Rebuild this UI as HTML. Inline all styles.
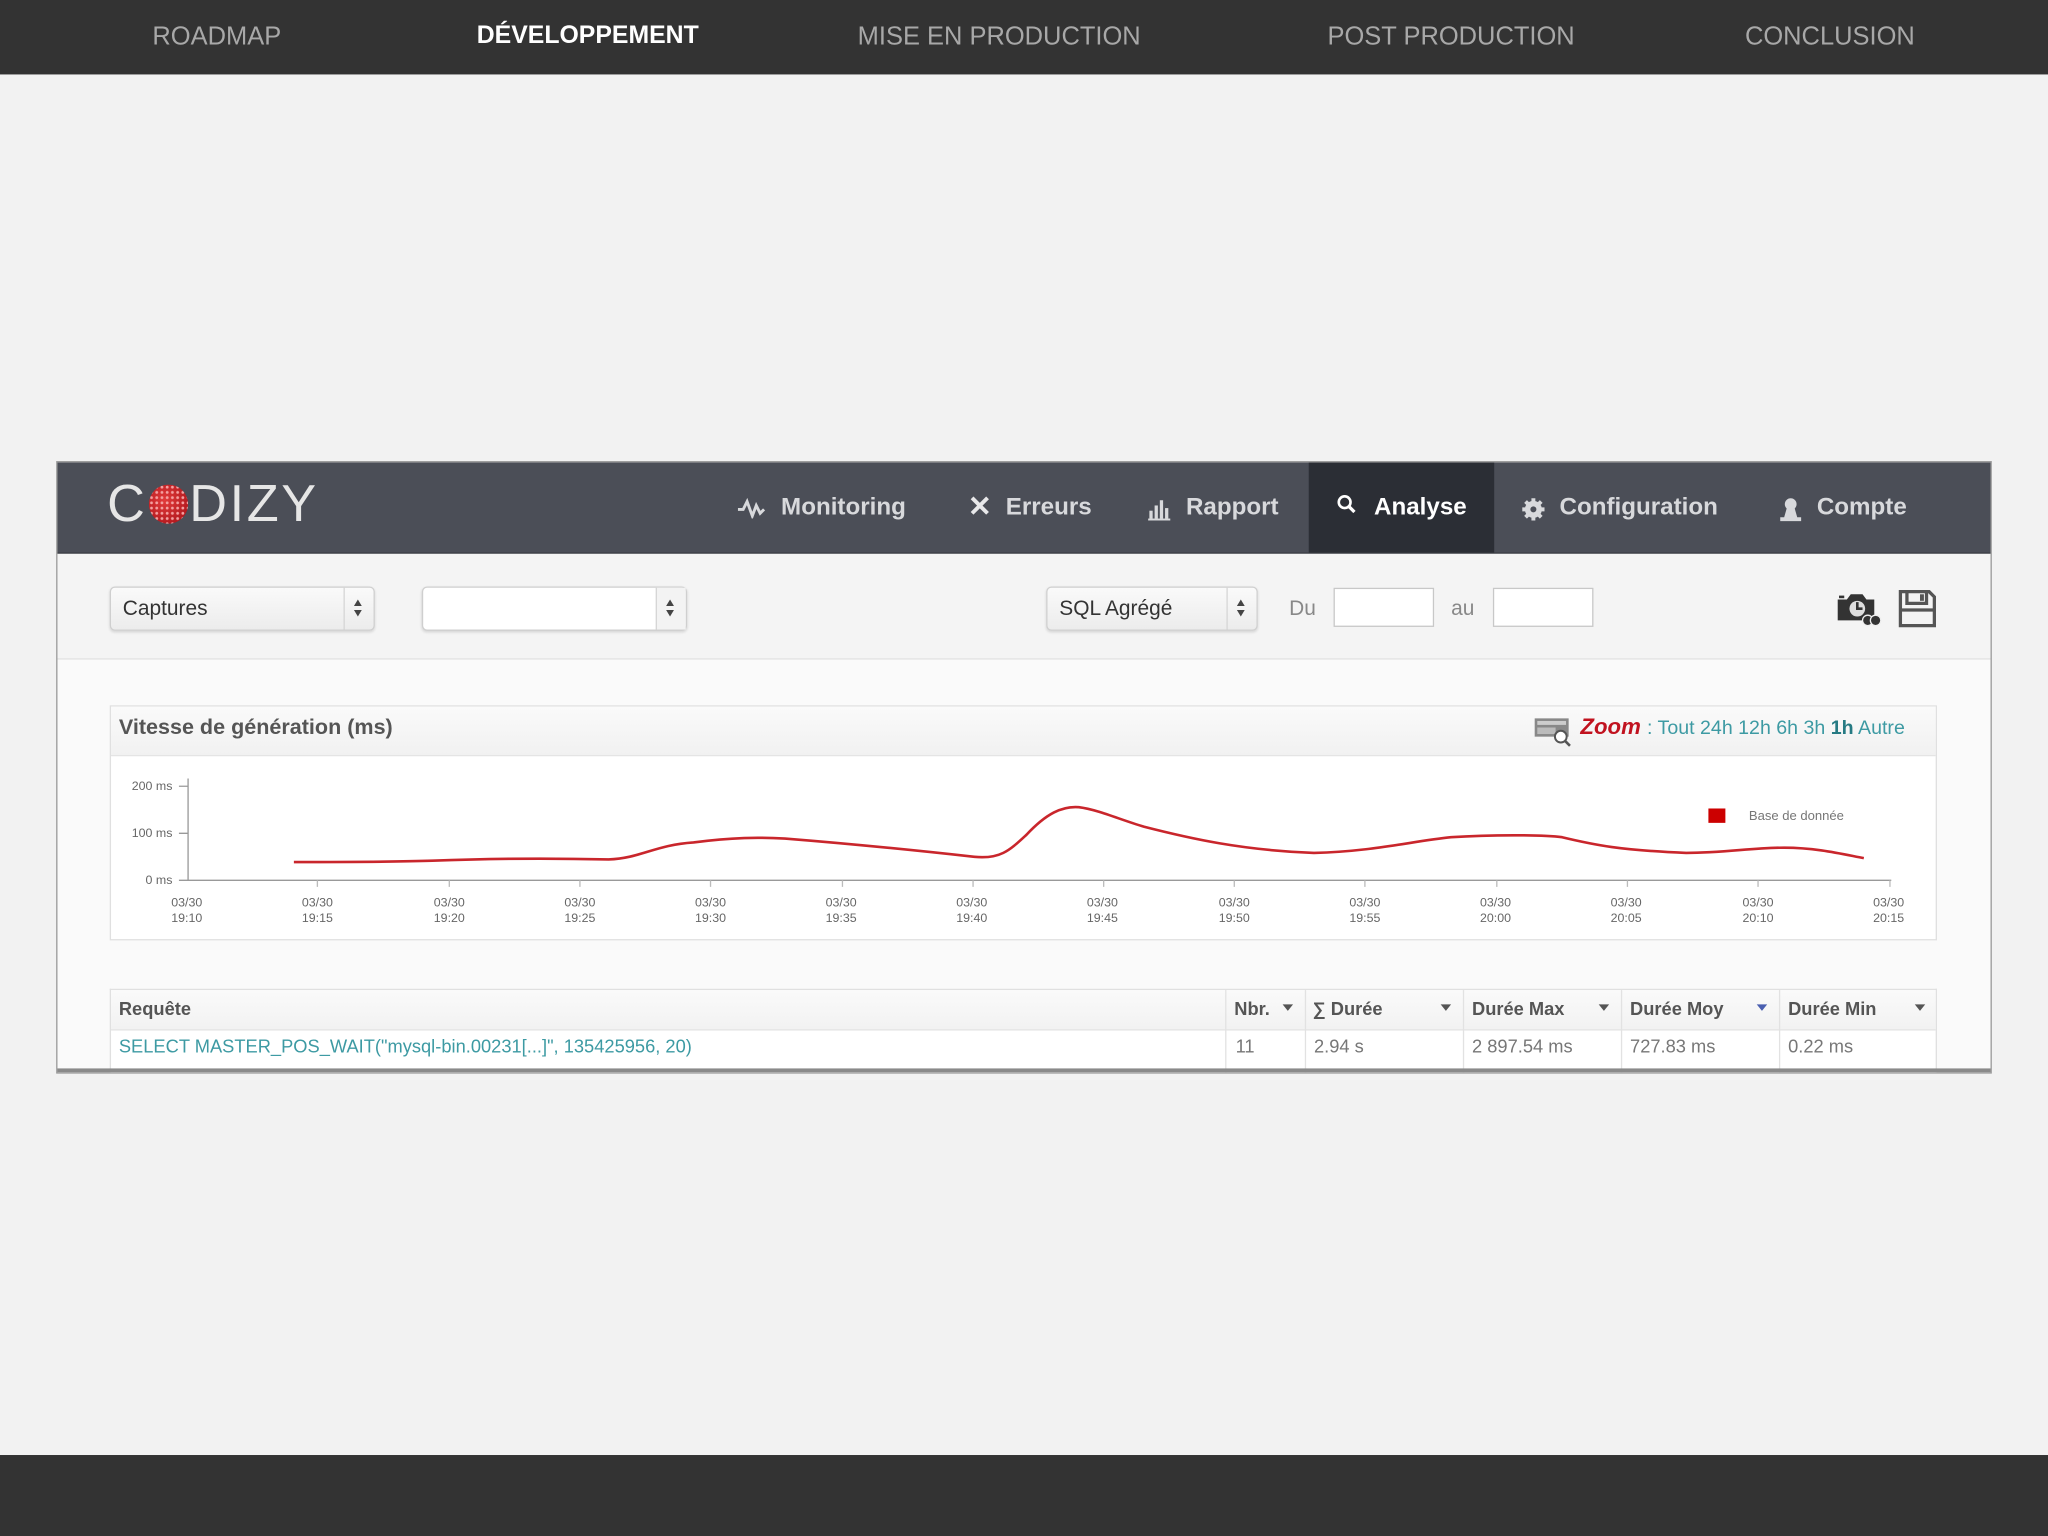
<!DOCTYPE html>
<html><head><meta charset="utf-8">
<style>
html,body{margin:0;padding:0;width:2048px;height:1536px;overflow:hidden;background:#f2f2f2;}
#w{position:absolute;left:0;top:0;width:1568px;height:1176px;transform:scale(1.30612);transform-origin:0 0;font-family:"Liberation Sans",sans-serif;}
.a{position:absolute;}
.top{left:0;top:0;width:1568px;height:57px;background:#333;}
.tn{top:17px;font-size:19.5px;color:#a8a8a8;transform:translateX(-50%);white-space:nowrap;}
.bot{left:0;top:1114px;width:1568px;height:62px;background:#333;}
.shot{left:43px;top:353px;width:1480px;height:467px;border:1px solid #999;background:#fafafa;overflow:hidden;}
.hdr{left:0;top:0;width:1480px;height:69px;background:#4b4e57;border-bottom:1px solid #3a3c42;}
.nv{top:23px;font-size:18.5px;font-weight:bold;color:#d8d9dc;white-space:nowrap;}
.tb{left:0;top:70px;width:1480px;height:80px;background:#f4f4f4;border-bottom:1px solid #e2e2e2;}
.sel{height:34px;border:1px solid #cfcfcf;border-radius:4px;background:linear-gradient(#fafafa,#ececec);box-shadow:0 1px 2px rgba(0,0,0,.12);box-sizing:border-box;}
.sel span{position:absolute;left:9px;top:8px;font-size:16px;color:#333;}
.sel i{position:absolute;right:0;top:0;width:22px;height:32px;border-left:1px solid #d6d6d6;}
.sel i:before{content:"";position:absolute;left:7px;top:9px;border:3.5px solid transparent;border-bottom:5px solid #444;border-top:0;}
.sel i:after{content:"";position:absolute;left:7px;top:17px;border:3.5px solid transparent;border-top:5px solid #444;border-bottom:0;}
.inp{height:30px;width:77px;border:1px solid #c8c8c8;background:#fff;box-sizing:border-box;}
.pn{border:1px solid #e0e0e0;background:#fff;box-sizing:border-box;}
.th{font-size:14px;font-weight:bold;color:#555;top:6px;}
.td{font-size:14px;color:#777;top:5px;}
.cb{position:absolute;top:0;width:1px;height:100%;background:#e2e2e2;}
.ar{position:absolute;top:11px;border:4px solid transparent;border-top:5px solid #555;border-bottom:0;}
</style></head><body><div id="w">
<div class="a top"></div>
<div class="a tn" style="left:166px">ROADMAP</div>
<div class="a tn" style="left:450px;color:#fff;font-weight:bold;font-size:19px">DÉVELOPPEMENT</div>
<div class="a tn" style="left:765px">MISE EN PRODUCTION</div>
<div class="a tn" style="left:1111px">POST PRODUCTION</div>
<div class="a tn" style="left:1401px">CONCLUSION</div>
<div class="a bot"></div>

<div class="a shot">
 <div class="a hdr"></div>
 <div class="a" style="left:958px;top:0;width:142px;height:69px;background:#2b2e35"></div>
 <div class="a" style="left:38px;top:10px;font-size:40px;color:#e6e6e6;letter-spacing:2px;font-weight:300">C<span style="display:inline-block;width:30px;height:30px;border-radius:50%;vertical-align:-2px;margin:0 1px;background-image:radial-gradient(circle,#f4a0a0 1px,transparent 1.2px),radial-gradient(circle at 40% 40%,#e23a3a,#a30f16);background-size:4px 4px,100% 100%"></span>DIZY</div>
 <svg class="a" style="left:520px;top:27px" width="22" height="16" viewBox="0 0 22 16"><path d="M1 9 L5 9 L8 3 L12 14 L15 6 L18 12 L21 9" fill="none" stroke="#d8d9dc" stroke-width="2.2"/></svg>
 <div class="a nv" style="left:554px">Monitoring</div>
 <div class="a" style="left:697px;top:21px;font-size:22px;font-weight:bold;color:#e8e8ea">✕</div>
 <div class="a nv" style="left:726px">Erreurs</div>
 <svg class="a" style="left:835px;top:27px" width="18" height="18"><g fill="#d8d9dc"><rect x="1" y="10" width="2.5" height="6"/><rect x="5" y="6" width="2.5" height="10"/><rect x="9" y="2" width="2.5" height="14"/><rect x="13" y="8" width="2.5" height="8"/><rect x="0" y="16" width="17" height="1.5"/></g></svg>
 <div class="a nv" style="left:864px">Rapport</div>
 <svg class="a" style="left:979px;top:24px" width="16" height="16"><circle cx="6.5" cy="6.5" r="4.5" fill="none" stroke="#fff" stroke-width="2"/><path d="M10 10 L14 14" stroke="#fff" stroke-width="2.5"/></svg>
 <div class="a nv" style="left:1008px;color:#fff">Analyse</div>
 <svg class="a" style="left:1121px;top:27px" width="18" height="18" viewBox="0 0 18 18"><circle cx="9" cy="9" r="6.5" fill="#d8d9dc"/><g stroke="#d8d9dc" stroke-width="3"><path d="M9 0.5V17.5M0.5 9H17.5M3 3L15 15M15 3L3 15"/></g><circle cx="9" cy="9" r="2.3" fill="#4b4e57"/></svg>
 <div class="a nv" style="left:1150px">Configuration</div>
 <svg class="a" style="left:1318px;top:26px" width="18" height="20"><circle cx="9" cy="6" r="4.5" fill="#d8d9dc"/><path d="M6 9 L4 16 L1 16 L1 19 L17 19 L17 16 L14 16 L12 9Z" fill="#d8d9dc"/></svg>
 <div class="a nv" style="left:1347px">Compte</div>

 <div class="a tb"></div>
 <div class="a sel" style="left:40px;top:95px;width:203px"><span>Captures</span><i></i></div>
 <div class="a sel" style="left:279px;top:95px;width:203px;background:#fff"><i style="background:#f3f3f3"></i></div>
 <div class="a sel" style="left:757px;top:95px;width:162px"><span>SQL Agrégé</span><i></i></div>
 <div class="a" style="left:943px;top:104px;font-size:16px;color:#888">Du</div>
 <div class="a inp" style="left:977px;top:96px"></div>
 <div class="a" style="left:1067px;top:104px;font-size:16px;color:#888">au</div>
 <div class="a inp" style="left:1099px;top:96px"></div>
 <svg class="a" style="left:1361px;top:98px" width="36" height="28" viewBox="0 0 36 28"><path d="M2 7h7l3-4h9l3 4h6v16H2z" fill="#333"/><rect x="3" y="4" width="4" height="2" fill="#333"/><circle cx="17" cy="14" r="6" fill="#ddd"/><path d="M17 9v5h4" stroke="#333" stroke-width="2" fill="none"/><circle cx="25" cy="23" r="4" fill="#333" stroke="#eee" stroke-width="1"/><circle cx="31" cy="23" r="4" fill="#333" stroke="#eee" stroke-width="1"/></svg>
 <svg class="a" style="left:1409px;top:97px" width="30" height="30" viewBox="0 0 30 30"><path d="M2 2h22l4 4v22H2z" fill="none" stroke="#555" stroke-width="2.5"/><path d="M7 2v9h15V2" fill="none" stroke="#555" stroke-width="2.5"/><rect x="17" y="4" width="3" height="5" fill="#555"/><path d="M2 16h26" stroke="#555" stroke-width="2.5"/></svg>

 <div class="a pn" style="left:40px;top:186px;width:1399px;height:180px">
  <div class="a" style="left:0;top:0;width:1397px;height:37px;background:linear-gradient(#fafafa,#f1f1f1);border-bottom:1px solid #e4e4e4"></div>
  <div class="a" style="left:6px;top:7px;font-size:16.5px;font-weight:bold;color:#555">Vitesse de génération (ms)</div>
  <svg class="a" style="left:1089px;top:7px" width="30" height="24"><rect x="1" y="2" width="26" height="14" fill="#888"/><rect x="3" y="4" width="22" height="3" fill="#ccc"/><rect x="3" y="9" width="14" height="5" fill="#bbb"/><circle cx="21" cy="16" r="4.5" fill="#fff" stroke="#555" stroke-width="1.5"/><path d="M24 19l4 4" stroke="#555" stroke-width="2"/></svg>
  <div class="a" style="left:1125px;top:6px;font-size:17px;font-weight:bold;font-style:italic;color:#c1121f">Zoom</div>
  <div class="a" style="left:1176px;top:8px;font-size:15px;color:#3d9aa3;white-space:nowrap">: Tout 24h 12h 6h 3h <b style="color:#267a83">1h</b> Autre</div>
 </div>
 <svg class="a" style="left:0;top:0" width="1480" height="467" viewBox="43 353 1480 467">
  <g font-family="Liberation Sans, sans-serif" font-size="9.5" fill="#666">
   <text x="131" y="604" text-anchor="end">200 ms</text><text x="131" y="640" text-anchor="end">100 ms</text><text x="131" y="676" text-anchor="end">0 ms</text>
  </g>
  <g stroke="#999" stroke-width="1" fill="none"><path d="M143 595V673H1447"/><path d="M136 601h7M136 637h7M136 673h7"/></g>
  <g stroke="#bbb" fill="none"><path d="M242 673v5M343 673v5M443 673v5M543 673v5M644 673v5M744 673v5M844 673v5M944 673v5M1044 673v5M1145 673v5M1245 673v5M1345 673v5M1446 673v5"/></g>
  <g font-family="Liberation Sans, sans-serif" font-size="9.5" fill="#666" text-anchor="middle">
   <text x="142" y="693">03/30</text><text x="142" y="705">19:10</text>
   <text x="242" y="693">03/30</text><text x="242" y="705">19:15</text>
   <text x="343" y="693">03/30</text><text x="343" y="705">19:20</text>
   <text x="443" y="693">03/30</text><text x="443" y="705">19:25</text>
   <text x="543" y="693">03/30</text><text x="543" y="705">19:30</text>
   <text x="643" y="693">03/30</text><text x="643" y="705">19:35</text>
   <text x="743" y="693">03/30</text><text x="743" y="705">19:40</text>
   <text x="843" y="693">03/30</text><text x="843" y="705">19:45</text>
   <text x="944" y="693">03/30</text><text x="944" y="705">19:50</text>
   <text x="1044" y="693">03/30</text><text x="1044" y="705">19:55</text>
   <text x="1144" y="693">03/30</text><text x="1144" y="705">20:00</text>
   <text x="1244" y="693">03/30</text><text x="1244" y="705">20:05</text>
   <text x="1345" y="693">03/30</text><text x="1345" y="705">20:10</text>
   <text x="1445" y="693">03/30</text><text x="1445" y="705">20:15</text>
  </g>
  <path d="M224 659 C260 659 300 659 330 658 C380 656 420 656 465 657 C490 656 500 646 530 644 C560 640 580 640 600 641 C650 645 700 650 745 655 C765 657 772 650 785 638 C800 622 812 616 825 617 C840 619 855 626 875 632 C910 641 950 650 1005 652 C1050 651 1080 643 1110 640 C1140 638 1180 638 1195 640 C1220 646 1240 650 1290 652 C1320 652 1340 648 1365 648 C1390 648 1410 653 1426 656" fill="none" stroke="#c9262c" stroke-width="2"/>
  <rect x="1307" y="618" width="13" height="11" fill="#c00"/>
  <text x="1338" y="627" font-family="Liberation Sans, sans-serif" font-size="10" fill="#777">Base de donnée</text>
 </svg>

 <div class="a pn" style="left:40px;top:403px;width:1399px;height:80px;border-bottom:0">
  <div class="a" style="left:0;top:0;width:1397px;height:30px;background:linear-gradient(#fafafa,#f2f2f2);border-bottom:1px solid #e2e2e2"></div>
  <div class="cb" style="left:853px"></div><div class="cb" style="left:914px"></div><div class="cb" style="left:1035px"></div><div class="cb" style="left:1156px"></div><div class="cb" style="left:1277px"></div>
  <div class="a th" style="left:6px">Requête</div>
  <div class="a th" style="left:860px">Nbr.</div><div class="ar" style="left:897px"></div>
  <div class="a th" style="left:920px">∑ Durée</div><div class="ar" style="left:1018px"></div>
  <div class="a th" style="left:1042px">Durée Max</div><div class="ar" style="left:1139px"></div>
  <div class="a th" style="left:1163px">Durée Moy</div><div class="ar" style="left:1260px;border-top-color:#4a5fb0"></div>
  <div class="a th" style="left:1284px">Durée Min</div><div class="ar" style="left:1381px"></div>
  <div class="a" style="left:0;top:30px;width:1397px;height:50px">
   <div class="a td" style="left:6px;color:#3d9aa3">SELECT MASTER_POS_WAIT("mysql-bin.00231[...]", 135425956, 20)</div>
   <div class="a td" style="left:861px">11</div>
   <div class="a td" style="left:921px">2.94 s</div>
   <div class="a td" style="left:1042px">2 897.54 ms</div>
   <div class="a td" style="left:1163px">727.83 ms</div>
   <div class="a td" style="left:1284px">0.22 ms</div>
  </div>
 </div>
 <div class="a" style="left:0;top:464px;width:1480px;height:3px;background:#8a8a8a"></div>
</div>
</div></body></html>
